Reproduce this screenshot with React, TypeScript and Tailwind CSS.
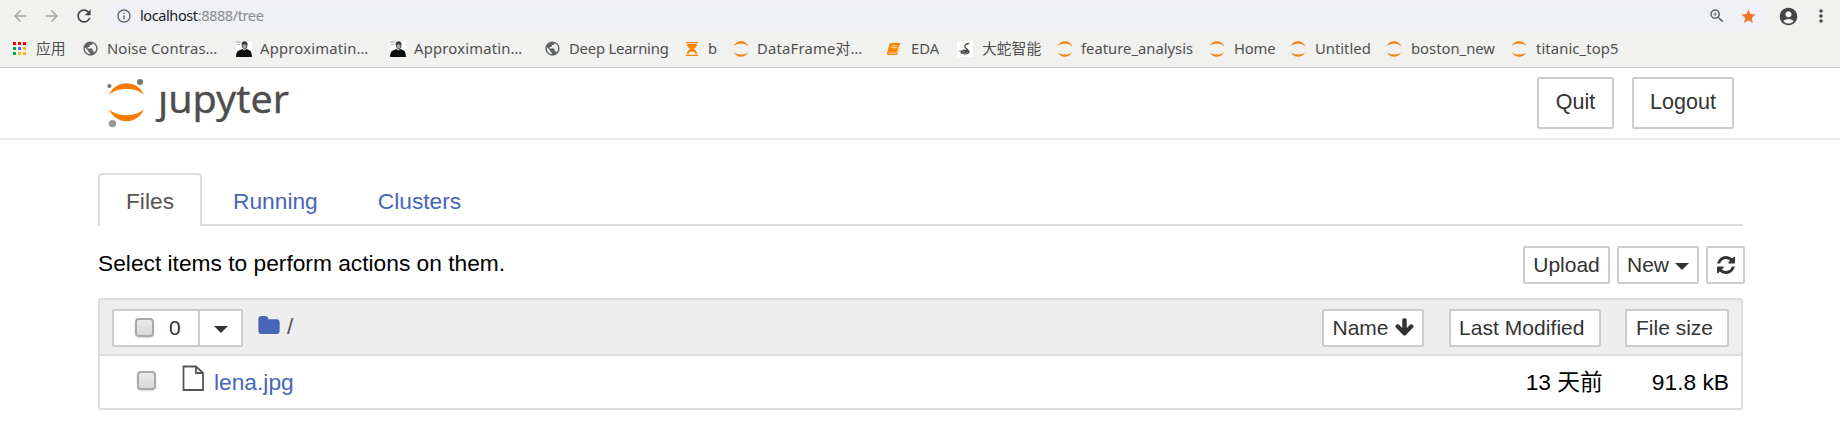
import React from "react";
import { MdArrowBack, MdArrowForward, MdRefresh, MdInfoOutline, MdZoomIn, MdStar, MdAccountCircle, MdMoreVert, MdPublic } from "react-icons/md";

const BAR_TEXT = "font-['Noto_Sans','Noto_Sans_CJK_SC',sans-serif]";

function Crescents() {
  return (
    <svg viewBox="0 0 16 16" className="h-4 w-4 shrink-0" fill="#f57c00">
      <path d="M.6 5C2.4 1.900 5 .3 8 .3s5.600 1.600 7.400 4.700C13.300 3.200 11 2.400 8 2.400S2.700 3.200.6 5Z" />
      <path d="M.6 11c1.800 3.100 4.400 4.700 7.400 4.700s5.600-1.600 7.400-4.700c-2.100 1.800-4.400 2.600-7.400 2.600S2.700 12.800.6 11Z" />
    </svg>
  );
}

function Globe() {
  return <MdPublic className="-ml-px h-[17px] w-[17px] shrink-0 text-[#5f6368]" />;
}

function Portrait() {
  return (
    <svg viewBox="0 0 16 16" className="h-4 w-4 shrink-0">
      <rect width="16" height="16" fill="#fff" />
      <path d="M0 .5h5v1H0zM1 3h3v.8H1z" fill="#999" />
      <path d="M5.600 3.500C5.600 1.200 6.800.2 8.600.2s2.900 1 2.900 3L11 6.800l-2 2.200-2.400-2.200Z" fill="#3a3a3a" />
      <path d="M6.900 3.600h3.500v2.700L8.800 8 7 6.500Z" fill="#a8a8a8" />
      <path d="M0 16c.2-3.600.8-5.600 3-6.400l3.400-1.600 2.200 1.400L10.800 8l3 1.400c1.500.8 1.900 3 2.200 6.600Z" fill="#0c0c0c" />
    </svg>
  );
}

function Hourglass() {
  return (
    <svg viewBox="0 0 16 16" className="h-4 w-4 shrink-0" fill="#fb8500">
      <path d="M2 1h12v1.200H2zM2 13.800h12V15H2z" />
      <path d="M3 3h10c0 2.500-1.500 4-3.400 5 1.900 1 3.400 2.500 3.400 5h-1.200c-.6-1.800-2-2.600-3.800-2.600S4.800 11.200 4.200 13H3c0-2.500 1.500-4 3.400-5C4.500 7 3 5.500 3 3Z" />
    </svg>
  );
}

function Book() {
  return (
    <svg viewBox="0 0 16 16" className="h-4 w-4 shrink-0">
      <path d="M5 2h8.300c.9 0 1.100.6.9 1.300l-2.600 9.500c-.2.800-.8 1.200-1.500 1.200H2.300c-1 0-1.600-.8-1.300-1.700L3.400 3.200C3.600 2.400 4.200 2 5 2Z" fill="#fb8500" />
      <path d="M5.500 4.800h5.700M4.900 6.700h5.700M2.500 12.200h7.700c.6 0 .9-.3 1-.8L13.400 4" stroke="#fff" strokeWidth=".7" fill="none" />
    </svg>
  );
}

function Snake() {
  return (
    <svg viewBox="0 0 16 16" className="h-4 w-4 shrink-0">
      <rect width="16" height="16" fill="#fff" />
      <path d="M12 2.500C9.500 2.500 7.500 4 8 5.800s3.500 2.200 2.600 4.200" stroke="#444" strokeWidth="1.300" fill="none" />
      <ellipse cx="8" cy="11" rx="4.600" ry="2.400" fill="#444" />
      <path d="M1.500 10.300c2-1 4.500-.8 6.500.4M5 12c2 .8 4 .5 6-.6" stroke="#999" strokeWidth=".9" fill="none" />
      <path d="M11.500 2.600 13 2" stroke="#b9a94b" strokeWidth="1" />
    </svg>
  );
}

function AppsGrid() {
  return (
    <svg viewBox="0 0 13 13" className="h-[13px] w-[13px] shrink-0">
      <path d="M0 0h3v3H0zM5 0h3v3H5zM10 0h3v3h-3z" fill="#f00" />
      <path d="M0 5h3v3H0zM0 10h3v3H0z" fill="#00a650" />
      <path d="M5 5h3v3H5z" fill="#4d6bfe" />
      <path d="M10 5h3v3h-3zM5 10h3v3H5zM10 10h3v3h-3z" fill="#f5b70a" />
    </svg>
  );
}

function Bookmark({ icon, label, box, text }: { icon: React.ReactNode; label: string; box: string; text: string }) {
  return (
    <div className={"flex shrink-0 items-center gap-[8px] " + box}>
      {icon}
      <span className={"whitespace-nowrap " + text}>{label}</span>
    </div>
  );
}

function Checkbox() {
  return (
    <span className="block h-[19px] w-[19px] shrink-0 rounded-[4px] border-2 border-[#a9a9a9] bg-linear-to-b from-[#eaeaea] to-[#d9d9d9] shadow-[0_1px_2px_rgba(0,0,0,0.15)]" />
  );
}

function Caret() {
  return (
    <svg viewBox="0 0 14 7" className="h-[7px] w-[14px] shrink-0" fill="#333">
      <path d="M0 0h14L7 7Z" />
    </svg>
  );
}

const BTN = "flex h-[38px] shrink-0 items-center rounded-[2px] border-2 border-[#ccc] bg-white text-[21px] leading-none text-[#333]";

export default function App() {
  return (
    <div className="h-[421px] w-[1840px] overflow-hidden bg-white font-['Liberation_Sans','Noto_Sans_CJK_SC',sans-serif] text-[22.750px] leading-none text-black">
      <div className={"h-[68px] border-b border-[#c8c8c8] bg-[#f1f1ef] " + BAR_TEXT}>
        <div className="flex h-8 items-center pl-[11px]">
          <MdArrowBack className="h-[20px] w-[18px] text-[#a5a5a3]" />
          <MdArrowForward className="ml-[14px] h-[20px] w-[18px] text-[#a5a5a3]" />
          <MdRefresh className="ml-[13px] h-[20px] w-[20px] text-[#454545]" />
          <div className="ml-[12px] flex h-7 w-[1660px] items-center rounded-full bg-[#f0f1f4] pl-[10px] pr-[9px]">
            <MdInfoOutline className="h-4 w-4 text-[#5f6368]" />
            <span className="ml-[8px] pb-px text-[14.500px] tracking-[-0.4px] text-[#888b90]">
              <span className="text-[#202124]">localhost</span>:8888/tree
            </span>
            <MdZoomIn className="ml-auto h-[18px] w-[18px] text-[#5f6368]" />
            <MdStar className="ml-[14px] h-[17px] w-[17px] text-[#f4742b]" />
          </div>
          <MdAccountCircle className="ml-[12px] h-[21px] w-[21px] text-[#454545]" />
          <MdMoreVert className="ml-[12px] h-[20px] w-[20px] text-[#454545]" />
        </div>
        <div className="flex h-[33px] items-center pl-[13px] text-[14.800px] text-[#505050]">
          <Bookmark icon={<AppsGrid />} label="应用" box="w-[70px]" text="ml-[2px]" />
          <Bookmark icon={<Globe />} label="Noise Contras…" box="w-[153px]" text="tracking-[0.1px]" />
          <Bookmark icon={<Portrait />} label="Approximatin…" box="w-[154px]" text="tracking-[0.2px]" />
          <Bookmark icon={<Portrait />} label="Approximatin…" box="w-[155px]" text="tracking-[0.2px]" />
          <Bookmark icon={<Globe />} label="Deep Learning" box="w-[139px]" text="tracking-[-0.2px]" />
          <Bookmark icon={<Hourglass />} label="b" box="w-[49px]" text="" />
          <Bookmark icon={<Crescents />} label="DataFrame对…" box="w-[153px]" text="tracking-[0.2px]" />
          <Bookmark icon={<Book />} label="EDA" box="w-[71px]" text="ml-px" />
          <Bookmark icon={<Snake />} label="大蛇智能" box="w-[100px]" text="ml-px" />
          <Bookmark icon={<Crescents />} label="feature_analysis" box="w-[152px]" text="" />
          <Bookmark icon={<Crescents />} label="Home" box="w-[81px]" text="ml-px tracking-[-0.2px]" />
          <Bookmark icon={<Crescents />} label="Untitled" box="w-[96px]" text="ml-px" />
          <Bookmark icon={<Crescents />} label="boston_new" box="w-[125px]" text="ml-px" />
          <Bookmark icon={<Crescents />} label="titanic_top5" box="w-[120px]" text="ml-px tracking-[0.1px]" />
        </div>
      </div>

      <header className="flex h-[72px] items-start border-b-2 border-[#e7e7e7] pl-[106px] pr-[106px] pt-[9px]">
        <svg viewBox="0 0 190 66" className="-mt-[9px] h-[66px] w-[190px] overflow-visible">
          <path d="M3 27C6 19.500 13 15.200 20.500 15.200S35 19.500 38 27C34 23 28 21 20.500 21S7 23 3 27Z" fill="#f57c00" />
          <path d="M3 41c3 7.700 10 12.200 17.500 12.200S35 48.700 38 41c-4 4-10 6.200-17.500 6.200S7 45 3 41Z" fill="#f57c00" />
          <circle cx="3.400" cy="18" r="2.100" fill="#757575" />
          <circle cx="34" cy="14" r="3" fill="#757575" />
          <circle cx="6.400" cy="55.600" r="3.700" fill="#979797" />
          <text x="52" y="44.500" textLength="131" lengthAdjust="spacingAndGlyphs" fontSize="37.500" fontFamily="Noto Sans, sans-serif" fill="#4e4e4e" stroke="#4e4e4e" strokeWidth=".3">ȷupyter</text>
        </svg>
        <button className="ml-auto h-[52px] w-[77px] rounded-[2px] border-2 border-[#ccc] text-[21.500px] text-[#333]">Quit</button>
        <button className="ml-[18px] h-[52px] w-[102px] rounded-[2px] border-2 border-[#ccc] text-[21.500px] text-[#333]">Logout</button>
      </header>

      <main className="ml-[98px] w-[1645px] pt-[33px]">
        <div className="flex h-[53px] border-b-2 border-[#ddd] text-[#4766b8]">
          <div className="-mb-[2px] h-[53px] w-[104px] rounded-t-[4px] border-2 border-b-0 border-[#ddd] bg-white pt-[15px] text-center text-[#555]">Files</div>
          <div className="ml-[31px] pt-[17px]">Running</div>
          <div className="ml-[60px] pt-[17px]">Clusters</div>
        </div>

        <div className="-mr-[2px] mt-[20px] flex h-[38px] items-center">
          <p className="pb-[3px]">Select items to perform actions on them.</p>
          <button className={BTN + " ml-auto w-[87px] justify-center pb-px"}>Upload</button>
          <button className={BTN + " ml-[7px] w-[82px] justify-center gap-[6px] pb-px"}>
            New <span className="mt-[3px]"><Caret /></span>
          </button>
          <button className={BTN + " ml-[7px] w-[39px] justify-center"}>
            <svg viewBox="0 128 1536 1536" className="-mt-px h-[18px] w-[18px]" fill="#333">
              <path d="M1511 1056q0 5-1 7-64 268-268 434.500t-478 166.500q-146 0-282.500-55t-243.500-157l-129 129q-19 19-45 19t-45-19-19-45v-448q0-26 19-45t45-19h448q26 0 45 19t19 45-19 45l-137 137q71 66 161 102t187 36q134 0 250-65t186-179q11-17 53-117 8-23 30-23h192q13 0 22.500 9.500t9.500 22.500zm25-800v448q0 26-19 45t-45 19h-448q-26 0-45-19t-19-45 19-45l138-138q-148-137-349-137-134 0-250 65t-186 179q-11 17-53 117-8 23-30 23h-199q-13 0-22.500-9.500t-9.500-22.500v-7q65-268 270-434.500t480-166.500q146 0 284 55.500t245 156.500l130-129q19-19 45-19t45 19 19 45z" />
            </svg>
          </button>
        </div>

        <section className="mt-[14px] h-[112px] rounded-[3px] border-2 border-[#ddd]">
          <div className="flex h-[56px] items-center border-b-2 border-[#ddd] bg-[#eee] pl-[12px] pr-[12px] pt-px">
            <div className={BTN}>
              <div className="flex h-full w-[84px] items-center pl-[21px] pb-px">
                <Checkbox />
                <span className="ml-[15px]">0</span>
              </div>
              <div className="flex h-full w-[43px] items-center justify-center border-l-2 border-[#ccc] pt-[3px]">
                <Caret />
              </div>
            </div>
            <svg viewBox="64 128 1664 1408" className="-mt-[6px] ml-[15px] h-[18px] w-[22px]" fill="#4766b8">
              <path d="M1728 608v704q0 92-66 158t-158 66h-1216q-92 0-158-66t-66-158v-960q0-92 66-158t158-66h320q92 0 158 66t66 158v32h672q92 0 158 66t66 158z" />
            </svg>
            <span className="ml-[7px] -mt-[2px] text-[#555]">/</span>
            <button className={BTN + " ml-auto w-[102px] justify-center gap-[6px] pb-px"}>
              Name
              <svg viewBox="90 100 1612 1540" className="h-[18px] w-[19px]" fill="#333">
                <path d="M1675 832q0 53-37 90l-651 652q-39 37-91 37-53 0-90-37l-651-652q-38-36-38-90 0-53 38-91l74-75q39-37 91-37 53 0 90 37l294 294v-704q0-52 38-90t90-38h128q52 0 90 38t38 90v704l294-294q37-37 90-37 52 0 91 37l75 75q37 39 37 91z" />
              </svg>
            </button>
            <button className={BTN + " ml-[25px] w-[152px] pb-px pl-[8px] tracking-[0.05px]"}>Last Modified</button>
            <button className={BTN + " ml-[24px] w-[104px] pb-px pl-[9px]"}>File size</button>
          </div>
          <div className="flex h-[52px] items-center pl-[37px] pr-[12px]">
            <span className="-mt-[3px]"><Checkbox /></span>
            <svg viewBox="0 0 22 26" className="-mt-[9px] ml-[26px] h-[26px] w-[22px]" fill="none" stroke="#5a5552" strokeWidth="1.800">
              <path d="M1.500 1.500H14L21 8V25H1.500ZM14 1.500V8H21" />
            </svg>
            <span className="ml-[10px] text-[#4766b8]">lena.jpg</span>
            <span className="ml-auto">13 天前</span>
            <span className="ml-[49px]">91.8 kB</span>
          </div>
        </section>
      </main>
    </div>
  );
}
